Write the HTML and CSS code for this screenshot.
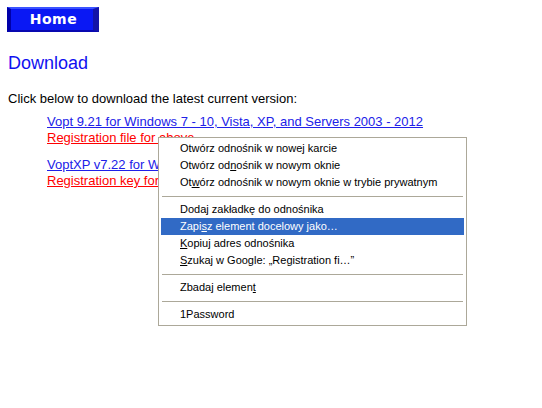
FILE: index.html
```html
<!DOCTYPE html>
<html lang="pl">
<head>
    <meta charset="UTF-8">
    <meta name="viewport" content="width=device-width, initial-scale=1.0">
    <title>Download</title>
    <link rel="stylesheet" href="styles.css">
</head>
<body>
    <a class="home-btn" href="#">Home</a>
    <h2 class="title">Download</h2>
    <p class="intro">Click below to download the latest current version:</p>
    <div class="downloads">
        <div class="dl-group">
            <a class="dl-link" href="#">Vopt 9.21 for Windows 7 - 10, Vista, XP, and Servers 2003 - 2012</a><br>
            <a class="reg-link" href="#">Registration file for above</a>
        </div>
        <div class="dl-group">
            <a class="dl-link" href="#">VoptXP v7.22 for Windows 2000, XP and Server 2003</a><br>
            <a class="reg-link" href="#">Registration key for VoptXP</a>
        </div>
    </div>

    <div class="context-menu">
        <div class="menu-item">Otwórz odnośnik w nowe<u>j</u> karcie</div>
        <div class="menu-item">Otwórz od<u>n</u>ośnik w nowym oknie</div>
        <div class="menu-item">Ot<u>w</u>órz odnośnik w nowym oknie w trybie prywatnym</div>
        <div class="menu-sep"></div>
        <div class="menu-item">Doda<u>j</u> zakładkę do odnośnika</div>
        <div class="menu-item active">Zapi<u>s</u>z element docelowy jako…</div>
        <div class="menu-item"><u>K</u>opiuj adres odnośnika</div>
        <div class="menu-item"><u>S</u>zukaj w Google: „Registration fi…”</div>
        <div class="menu-sep"></div>
        <div class="menu-item">Zbadaj elemen<u>t</u></div>
        <div class="menu-sep"></div>
        <div class="menu-item">1Password</div>
    </div>
</body>
</html>
```

FILE: styles.css
```css
body {
  font-family: "Liberation Sans", Arial, sans-serif;
  font-size: 13px;
  margin: 0;
  padding: 7px 8px;
  background: #fff;
  color: #000;
}

.home-btn {
  display: block;
  box-sizing: border-box;
  width: 92px;
  height: 25px;
  margin-left: -1px;
  padding-left: 3px;
  background: #0a18f4;
  border-top: 2px solid #3a52ff;
  border-left: 4px solid #0000a8;
  border-right: 6px solid #1414a8;
  border-bottom: 2px solid #0808b0;
  color: #fff;
  font-family: "DejaVu Sans", Verdana, sans-serif;
  font-weight: bold;
  font-size: 14px;
  letter-spacing: 0.5px;
  line-height: 21px;
  text-align: center;
  text-decoration: none;
}

.title {
  margin: 20px 0 0;
  font-size: 18px;
  font-weight: normal;
  line-height: 22px;
  color: #1010f0;
}

.intro {
  margin: 17px 0 0;
  line-height: 16px;
}

.downloads {
  padding-left: 39px;
  margin-top: 7px;
}

.dl-group {
  line-height: 16px;
  margin-bottom: 11px;
}

.dl-link {
  color: #2020e8;
}

.reg-link {
  color: #ff0000;
}

.context-menu {
  position: absolute;
  left: 158px;
  top: 137px;
  width: 303px;
  padding: 2px 2px 2px;
  background: #fff;
  border: 1px solid #aca899;
  font-family: "Liberation Sans", Tahoma, sans-serif;
  font-size: 11px;
}

.menu-item {
  height: 17px;
  line-height: 17px;
  padding-left: 19px;
  white-space: nowrap;
}

.menu-item.active {
  background: #316ac5;
  color: #fff;
}

.menu-sep {
  height: 1px;
  margin: 5px 1px 4px;
  background: #aca899;
}
```
